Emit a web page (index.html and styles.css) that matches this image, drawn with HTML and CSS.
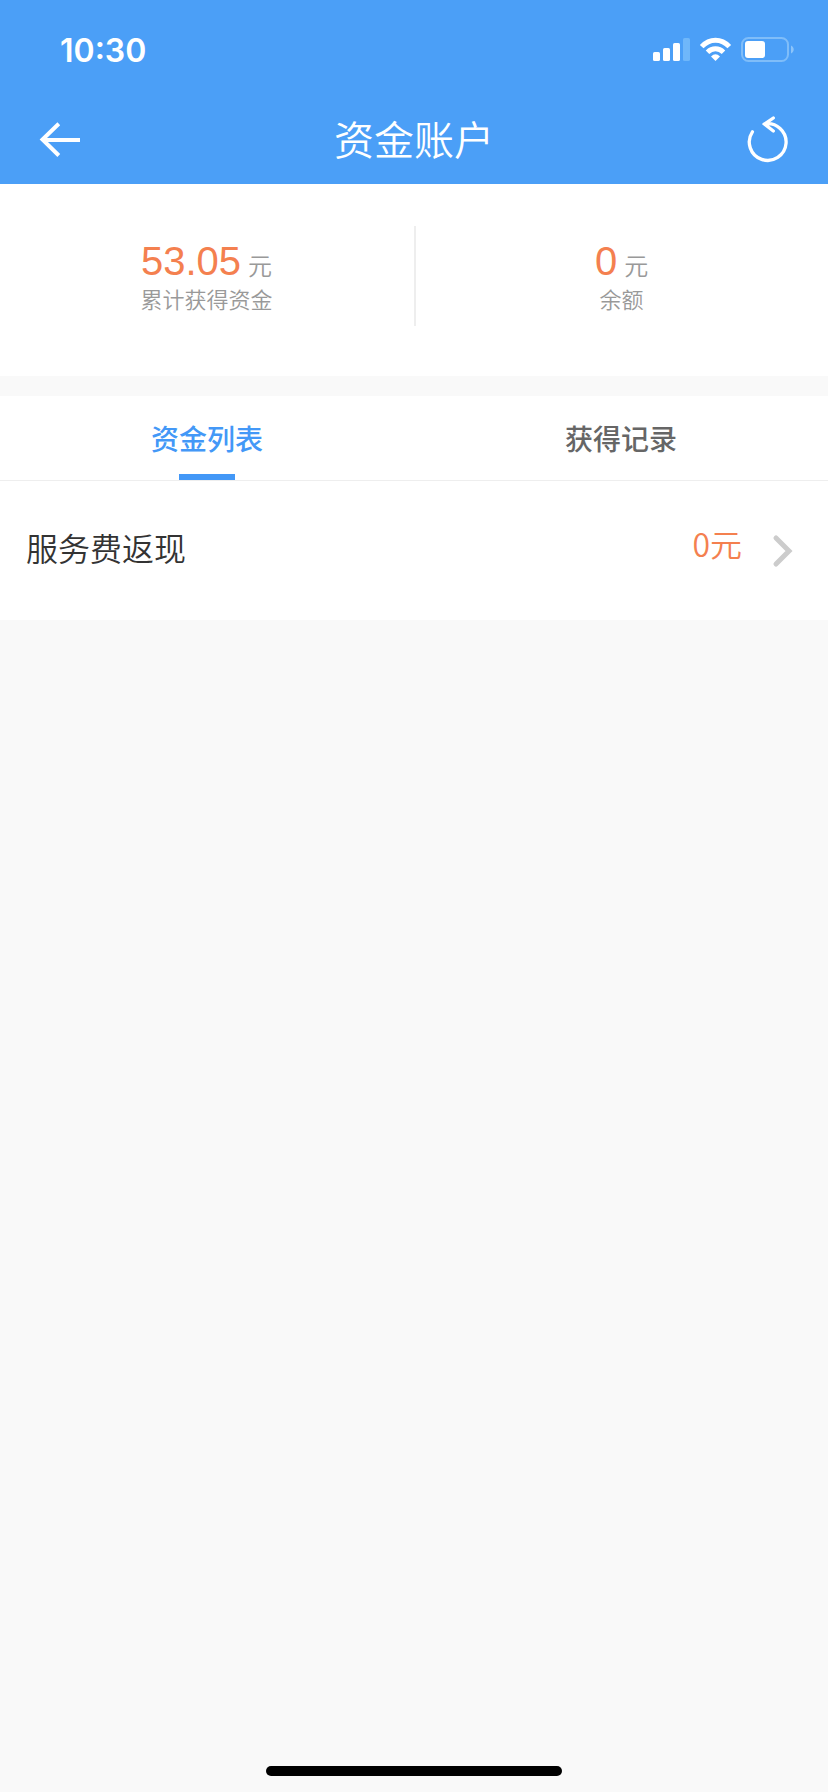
FILE: index.html
```html
<!DOCTYPE html>
<html lang="zh-CN">
<head>
<meta charset="utf-8">
<title>资金账户</title>
<link rel="stylesheet" href="styles.css">
</head>
<body>
<div class="screen">
  <header class="header">
    <div class="status">
      <span class="time">10:30</span>
      <svg class="status-icons" width="144" height="28" viewBox="0 0 144 28" fill="#fff">
        <rect x="1" y="16" width="7" height="9" rx="1.6"/>
        <rect x="11" y="12" width="7" height="13" rx="1.6"/>
        <rect x="21" y="7" width="7" height="18" rx="1.6"/>
        <rect x="31" y="2" width="7" height="23" rx="1.6" fill="#6fb7fa"/>
        <g fill="none" stroke="#fff" stroke-width="5">
          <path d="M49.7 10.6C57.6 2.1 69.4 2.1 77.3 10.6"/>
          <path d="M55.5 16.3C60.2 11.7 66.8 11.7 71.5 16.3"/>
        </g>
        <path d="M59 20.4Q63.500 16.300 68 20.400L63.500 25Z"/>
        <rect x="90" y="2" width="46" height="23" rx="6.500" fill="none" stroke="#7fbdf9" stroke-width="2"/>
        <rect x="93" y="5" width="20" height="17" rx="3"/>
        <path d="M139 9.500C142.600 11 142.600 16 139 17.500Z" fill="#8cc4fa"/>
      </svg>
    </div>
    <div class="navbar">
      <svg class="nav-icon" width="48" height="52" viewBox="0 0 48 52" fill="none" stroke="#fff" stroke-width="4">
        <path d="M44 26H7M22.800 9.700L6.500 25.500L22.800 41.500"/>
      </svg>
      <h1 class="title">资金账户</h1>
      <svg class="nav-icon" width="48" height="52" viewBox="0 0 48 52" fill="none" stroke="#fff" stroke-width="3.300" stroke-linecap="round">
        <path d="M8.400 17.800A18.400 18.400 0 1 0 20.500 9.900M29.300 4L20.500 10.100L29.300 17"/>
      </svg>
    </div>
  </header>
  <section class="summary">
    <div class="stat">
      <div class="amount"><span class="number">53.05</span><span class="unit">元</span></div>
      <div class="label">累计获得资金</div>
    </div>
    <div class="divider"></div>
    <div class="stat">
      <div class="amount"><span class="number">0</span><span class="unit">元</span></div>
      <div class="label">余额</div>
    </div>
  </section>
  <nav class="tabs">
    <div class="tab tab-active">资金列表</div>
    <div class="tab">获得记录</div>
  </nav>
  <div class="row">
    <span class="row-name">服务费返现</span>
    <span class="row-value">0元</span>
    <svg class="chevron" width="24" height="34" viewBox="0 0 24 34" fill="none" stroke="#ccc" stroke-width="5" stroke-linecap="round">
      <path d="M5 4L18 17L5 30"/>
    </svg>
  </div>
  <footer class="home"><div class="home-bar"></div></footer>
</div>
</body>
</html>
```
FILE: styles.css
```css
* { box-sizing: border-box; }
body {
  margin: 0;
  background: #f9f9f9;
  font-family: "Noto Sans CJK SC", sans-serif;
}
.screen {
  width: 828px;
  height: 1792px;
  display: flex;
  flex-direction: column;
}
.header {
  height: 184px;
  background: #4b9ff7;
  color: #fff;
}
.status {
  height: 96px;
  padding: 0 32px 0 60px;
  display: flex;
  align-items: center;
  justify-content: space-between;
}
.time {
  font: 600 32px/40px Inter, sans-serif;
  padding-top: 5px;
}
.status-icons { margin-top: 4px; }
.navbar {
  height: 88px;
  padding: 0 36px;
  display: flex;
  align-items: center;
  justify-content: space-between;
}
.title {
  margin: 0 0 4px;
  font-size: 40px;
  line-height: 60px;
  font-weight: 350;
}
.summary {
  height: 192px;
  background: #fff;
  display: flex;
}
.stat {
  flex: 1;
  padding-top: 52px;
  display: flex;
  flex-direction: column;
  align-items: center;
}
.amount {
  height: 50px;
  display: flex;
  align-items: baseline;
  gap: 7px;
  line-height: 50px;
}
.number {
  color: #f4804f;
  font-family: "Liberation Sans", sans-serif;
  font-size: 40px;
}
.unit {
  color: #999;
  font-size: 24px;
  font-weight: 350;
}
.label {
  color: #999;
  font-size: 22px;
  line-height: 24px;
  font-weight: 350;
}
.divider {
  width: 2px;
  height: 100px;
  margin: 42px -1px 0 1px;
  background: #eee;
}
.tabs {
  height: 85px;
  margin-top: 20px;
  background: #fff;
  border-bottom: 1px solid #eee;
  display: flex;
}
.tab {
  flex: 1;
  display: flex;
  flex-direction: column;
  align-items: center;
  padding-top: 22px;
  color: #666;
  font-size: 28px;
  line-height: 40px;
  font-weight: 500;
}
.tab-active { color: #4398f7; }
.tab-active::after {
  content: "";
  width: 56px;
  height: 6px;
  margin-top: 16px;
  background: #4398f7;
}
.row {
  height: 139px;
  padding: 0 33px 0 26px;
  background: #fff;
  display: flex;
  align-items: center;
  line-height: 48px;
  font-size: 32px;
}
.row-name {
  flex: 1;
  margin-bottom: 7px;
  color: #333;
  font-weight: 350;
}
.row-value {
  margin-bottom: 15px;
  color: #f4804f;
  font-weight: 350;
}
.chevron { margin-left: 29px; }
.home {
  margin-top: auto;
  padding-bottom: 16px;
  display: flex;
  justify-content: center;
}
.home-bar {
  width: 296px;
  height: 10px;
  border-radius: 5px;
  background: #000;
}
```
